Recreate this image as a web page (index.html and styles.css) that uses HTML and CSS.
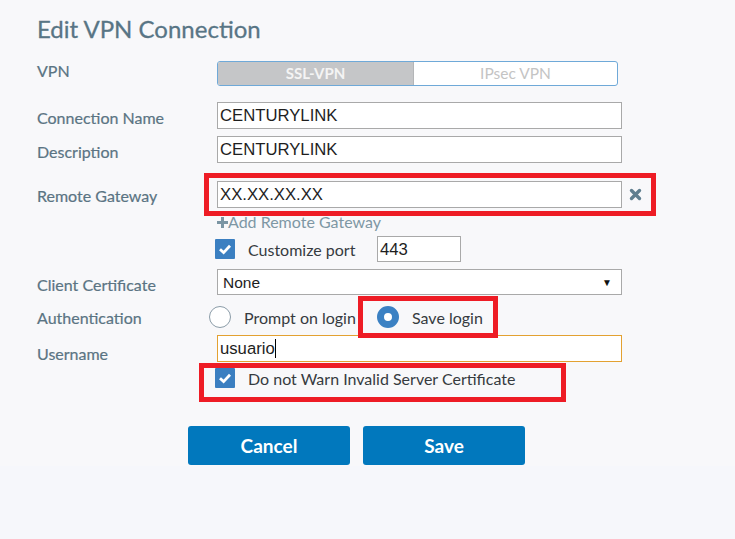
FILE: index.html
```html
<!DOCTYPE html>
<html lang="en">
<head>
    <meta charset="UTF-8">
    <title>Edit VPN Connection</title>
    <link rel="stylesheet" href="styles.css">
</head>
<body>
    <div class="dialog">
        <h1 class="title">Edit VPN Connection</h1>

        <div class="row row-vpn">
            <span class="field-label">VPN</span>
            <div class="toggle">
                <span class="toggle-opt active">SSL-VPN</span>
                <span class="toggle-opt">IPsec VPN</span>
            </div>
        </div>

        <div class="row row-input row-first">
            <span class="field-label">Connection Name</span>
            <div class="text-box">CENTURYLINK</div>
        </div>

        <div class="row row-input row-desc">
            <span class="field-label">Description</span>
            <div class="text-box">CENTURYLINK</div>
        </div>

        <div class="row row-input row-gateway">
            <span class="field-label">Remote Gateway</span>
            <div class="text-box">XX.XX.XX.XX</div>
            <svg class="remove-icon" width="13" height="13" viewBox="0 0 13 13">
                <path d="M2.5 2.5L10.5 10.5M10.5 2.5L2.5 10.5" stroke="#5f7e8f" stroke-width="3.4" stroke-linecap="round"/>
            </svg>
        </div>

        <div class="add-link">
            <svg width="11" height="11" viewBox="0 0 11 11">
                <rect x="4" y="0" width="3" height="11" fill="#7b95a3"/>
                <rect x="0" y="4" width="11" height="3" fill="#7b95a3"/>
            </svg>Add Remote Gateway
        </div>

        <div class="row row-port">
            <span class="checkbox">
                <svg width="20" height="20" viewBox="0 0 20 20"><path d="M5 10.2L8.6 13.6L15 6.8" fill="none" stroke="#fff" stroke-width="2.8"/></svg>
            </span>
            <span class="check-text port-text">Customize port</span>
            <div class="text-box port-box">443</div>
        </div>

        <div class="row row-input row-cert">
            <span class="field-label">Client Certificate</span>
            <div class="text-box select-box">None<span class="arrow">&#9660;</span></div>
        </div>

        <div class="row row-auth">
            <span class="field-label">Authentication</span>
            <div class="radio-option first">
                <span class="radio"></span>
                <span class="check-text">Prompt on login</span>
            </div>
            <div class="radio-option">
                <span class="radio checked"></span>
                <span class="check-text">Save login</span>
            </div>
        </div>

        <div class="row row-input row-user">
            <span class="field-label">Username</span>
            <div class="text-box focused">usuario<span class="caret"></span></div>
        </div>

        <div class="row row-warn">
            <span class="checkbox">
                <svg width="20" height="20" viewBox="0 0 20 20"><path d="M5 10.2L8.6 13.6L15 6.8" fill="none" stroke="#fff" stroke-width="2.8"/></svg>
            </span>
            <span class="check-text">Do not Warn Invalid Server Certificate</span>
        </div>

        <div class="buttons">
            <button class="btn">Cancel</button>
            <button class="btn">Save</button>
        </div>

        <!-- annotation boxes drawn over the form -->
        <div class="mark mark-gateway"></div>
        <div class="mark mark-login"></div>
        <div class="mark mark-warn"></div>
    </div>
</body>
</html>
```

FILE: styles.css
```css
body {
    margin: 0;
    background-color: #f6f7fb;
    font-family: Lato, "Open Sans", sans-serif;
}

.dialog {
    position: relative;
    height: 466px;
    padding-left: 37px;
    background-color: #f8f8fa;
}

.title {
    margin: 0;
    padding-top: 14px;
    font-size: 24px;
    line-height: 30px;
    font-weight: normal;
    color: #587585;
    -webkit-text-stroke: 0.3px #587585;
}

.row {
    display: flex;
    align-items: center;
}

.field-label {
    width: 180px;
    flex: none;
    font-size: 16px;
    line-height: 20px;
    color: #5b7483;
    -webkit-text-stroke: 0.2px #5b7483;
}

.row-vpn {
    margin-top: 17px;
    height: 25px;
}

.row-vpn .field-label {
    margin-bottom: 6px;
}

.toggle {
    display: flex;
    width: 401px;
    height: 25px;
    box-sizing: border-box;
    border: 1px solid #6fa9d8;
    border-radius: 3px;
    overflow: hidden;
    background-color: #fff;
}

.toggle-opt {
    flex: 1;
    text-align: center;
    font-size: 15.5px;
    line-height: 23px;
    color: #c4c4c4;
}

.toggle-opt.active {
    flex: none;
    width: 195px;
    background-color: #c5c6c8;
    color: #f4f4f4;
    font-weight: bold;
    font-size: 15px;
    border-right: 1px solid #b4b6b8;
}

.row-input {
    height: 27px;
}

.row-input .field-label {
    margin-top: 5px;
}

.row-first { margin-top: 16px; }
.row-desc { margin-top: 7px; }
.row-gateway { margin-top: 18px; }
.row-gateway .field-label { margin-top: 2px; }
.row-cert { margin-top: 7px; height: 26px; }
.row-user { margin-top: 7px; }

.text-box {
    position: relative;
    width: 405px;
    height: 100%;
    box-sizing: border-box;
    border: 1px solid #a9a9a9;
    background-color: #fff;
    padding-left: 2px;
    font-family: "Liberation Sans", Arial, sans-serif;
    font-size: 16.7px;
    line-height: 25px;
    color: #1e1e1e;
}

.text-box.focused {
    border: 1px solid #e3a131;
}

.caret {
    display: inline-block;
    width: 1px;
    height: 19px;
    background-color: #000;
    vertical-align: -4px;
}

.select-box {
    padding-left: 5px;
    font-size: 15.5px;
}

.arrow {
    position: absolute;
    right: 9px;
    top: 0;
    font-size: 10px;
    color: #111;
}

.remove-icon {
    margin-left: 7px;
}

.add-link {
    margin: 6px 0 0 180px;
    height: 16px;
    font-size: 16px;
    line-height: 16px;
    color: #7e97a4;
}

.row-port {
    margin-top: 6px;
    height: 26px;
    padding-left: 178px;
}

.checkbox {
    display: block;
    width: 20px;
    height: 20px;
    flex: none;
    background-color: #3b7fc1;
    border-radius: 1px;
}

.checkbox svg {
    display: block;
}

.check-text {
    margin-left: 13px;
    font-size: 16px;
    color: #363b3f;
}

.port-text {
    width: 129px;
}

.port-box {
    width: 84px;
    font-size: 16.7px;
}

.row-auth {
    margin-top: 11px;
    height: 22px;
}

.row-auth .field-label {
    margin-top: 2px;
}

.radio-option {
    display: flex;
    align-items: center;
}

.radio-option.first {
    width: 168px;
    margin-left: -8px;
}

.radio {
    display: block;
    width: 22px;
    height: 22px;
    flex: none;
    box-sizing: border-box;
    border: 1px solid #8b9ca8;
    border-radius: 50%;
    background-color: #fff;
}

.radio.checked {
    border: 7px solid #3b81c3;
}

.row-user .field-label {
    margin-top: 10px;
}

.row-warn {
    margin-top: 6px;
    height: 20px;
    padding-left: 178px;
}

.buttons {
    display: flex;
    gap: 13px;
    margin: 38px 0 0 151px;
}

.btn {
    width: 162px;
    height: 39px;
    border: none;
    border-radius: 3px;
    background-color: #0178bd;
    color: #fff;
    font-family: Lato, sans-serif;
    font-size: 19px;
    font-weight: bold;
}

.mark {
    position: absolute;
    box-sizing: border-box;
    border: 5px solid #ee1c25;
}

.mark-gateway {
    left: 204px;
    top: 173px;
    width: 452px;
    height: 43px;
}

.mark-login {
    left: 358px;
    top: 296px;
    width: 140px;
    height: 42px;
}

.mark-warn {
    left: 199px;
    top: 363px;
    width: 367px;
    height: 39px;
}
```
